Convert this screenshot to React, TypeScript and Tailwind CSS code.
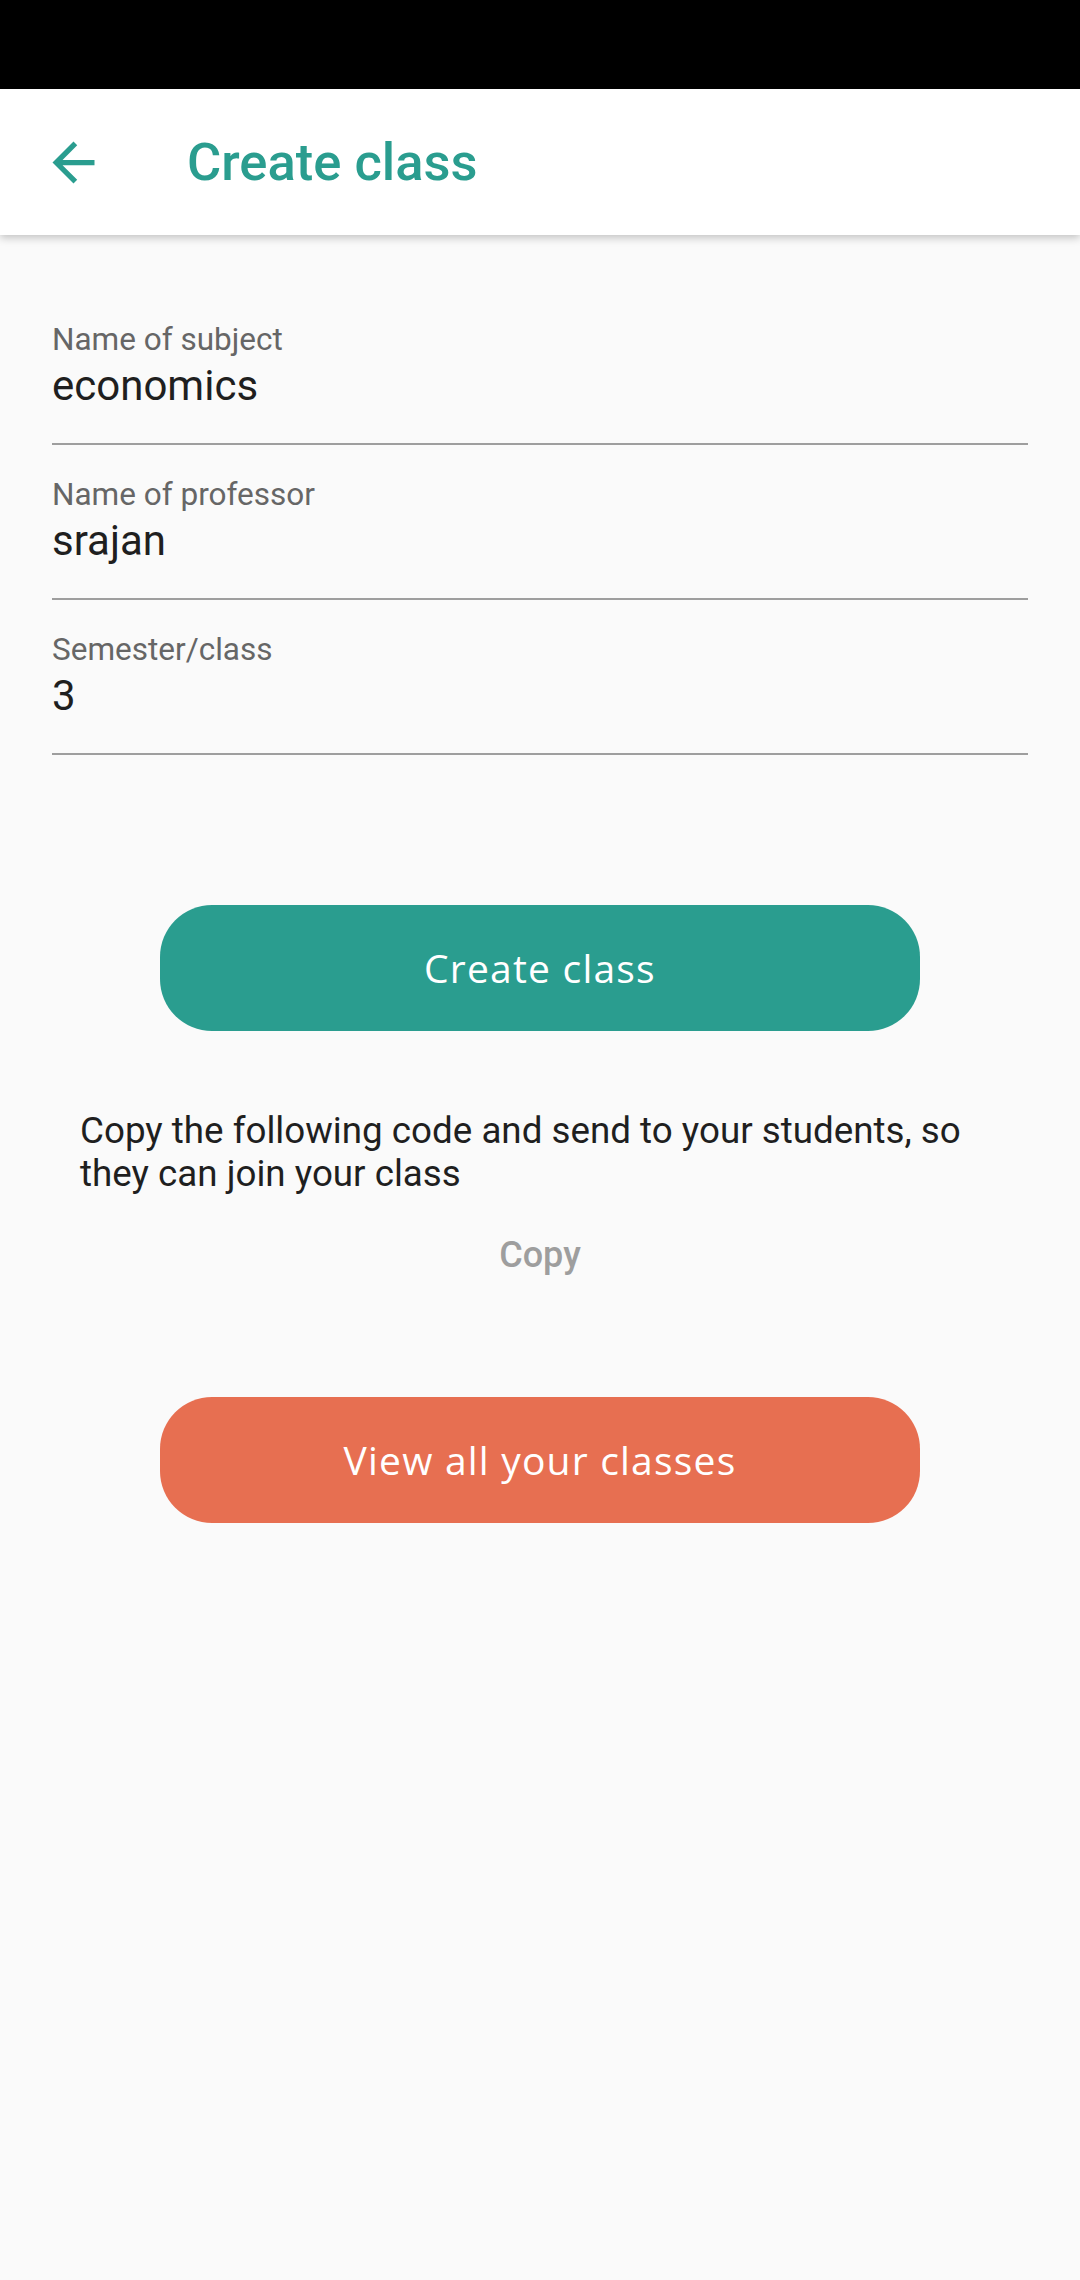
import React from "react";

const fields = [
  { label: "Name of subject", value: "economics" },
  { label: "Name of professor", value: "srajan" },
  { label: "Semester/class", value: "3" },
];

const Field = ({ label, value }: { label: string; value: string }) => (
  <div className="pt-[31px] pb-[33px] border-b-2 border-[#9e9e9e]">
    <div className="text-[31.5px] leading-[37px] text-[#666666]">{label}</div>
    <div className="mt-[3px] text-[42px] leading-[49px] text-[#1f1f1f]">{value}</div>
  </div>
);

export default function App() {
  return (
    <div className="min-h-[2280px] bg-[#fafafa] font-['Roboto',sans-serif]">
      <div className="h-[89px] bg-black" />

      <header className="relative z-10 flex h-[146px] items-center bg-white shadow-[0_3px_8px_rgba(0,0,0,0.22)]">
        <button className="flex h-full w-[147px] items-center justify-center">
          <svg viewBox="0 0 24 24" className="h-[63px] w-[63px] fill-[#2a9d8f]">
            <path d="M20 11H7.83l5.59-5.59L12 4l-8 8 8 8 1.41-1.41L7.83 13H20v-2z" />
          </svg>
        </button>
        <h1 className="ml-[40px] text-[52.5px] font-medium text-[#2a9d8f]">Create class</h1>
      </header>

      <main className="px-[52px] pt-[55px]">
        {fields.map((f) => (
          <Field key={f.label} label={f.label} value={f.value} />
        ))}

        <div className="mt-[150px] flex justify-center">
          <button className="h-[126px] w-[760px] rounded-[52px] bg-[#2a9d8f] font-['Open_Sans',sans-serif] text-[39px] font-normal tracking-[1.2px] text-white">
            Create class
          </button>
        </div>

        <p className="mt-[78px] px-[28px] text-[36.75px] leading-[43px] text-[#1f1f1f]">
          Copy the following code and send to your students, so they can join your class
        </p>

        <div className="mt-[39px] text-center text-[36px] leading-[43px] font-medium text-[#9e9e9e]">Copy</div>

        <div className="mt-[120px] flex justify-center">
          <button className="h-[126px] w-[760px] rounded-[52px] bg-[#e76f51] font-['Open_Sans',sans-serif] text-[39px] font-normal tracking-[1.2px] text-white">
            View all your classes
          </button>
        </div>
      </main>
    </div>
  );
}
